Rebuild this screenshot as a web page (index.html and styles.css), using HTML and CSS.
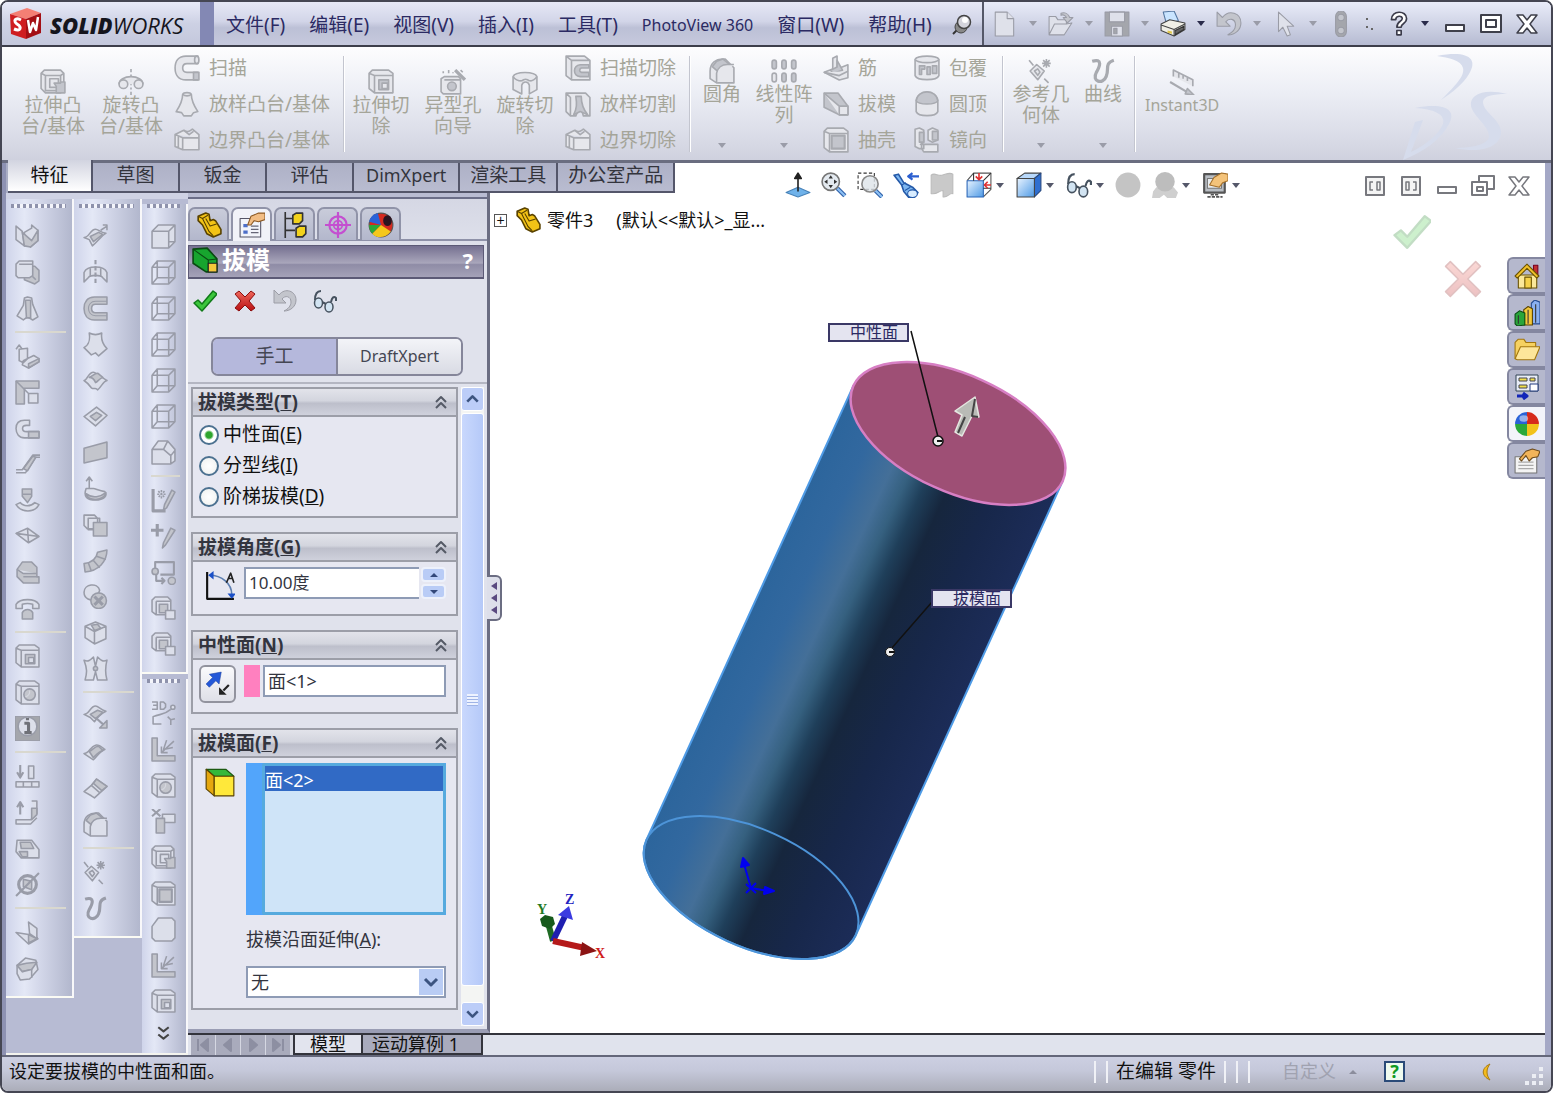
FILE: index.html
```html
<!DOCTYPE html>
<html lang="zh-CN">
<head>
    <meta charset="UTF-8">
    <meta name="viewport" content="width=device-width, initial-scale=1.0">
    <title>SolidWorks - 零件3</title>
    <link rel="stylesheet" href="styles.css">
</head>
<body>

<!-- icon set, 24x24 -->
<svg class="sprite" aria-hidden="true">
    <defs>
        <linearGradient id="blueface" x1="0" y1="0" x2="1" y2="1"><stop offset="0" stop-color="#e8f3ff"/><stop offset="1" stop-color="#4f9be6"/></linearGradient>
        <linearGradient id="redface" x1="0" y1="0" x2="0" y2="1"><stop offset="0" stop-color="#f0685c"/><stop offset="1" stop-color="#b80f12"/></linearGradient>
        <linearGradient id="body" gradientUnits="userSpaceOnUse" x1="-115" y1="0" x2="115" y2="0">
            <stop offset="0" stop-color="#2c659c"/><stop offset=".16" stop-color="#32689f"/><stop offset=".3" stop-color="#446f98"/>
            <stop offset=".38" stop-color="#35607f"/><stop offset=".46" stop-color="#1f3f5a"/><stop offset=".56" stop-color="#16263d"/><stop offset=".75" stop-color="#17274a"/><stop offset="1" stop-color="#1c2c58"/>
        </linearGradient>
    </defs>

    <!-- ribbon -->
    <symbol id="boss" viewBox="0 0 24 24"><path d="M1 4l3-3h15l3 3v15l-3 3H5l-4-4zM5 6h14v14H5zM1 4l4 2M19 6l3-2M9 9h8v8H9z"/><path class="d" d="M13 13h6v-1h4v10h-8v-6z"/></symbol>
    <symbol id="revolve" viewBox="0 0 24 24"><path d="M12 0v3M12 5v14M12 21v3" stroke-dasharray="4 2"/><path d="M1 14c0-4 5-7 11-7s11 3 11 7"/><circle cx="5" cy="14" r="4"/><circle cx="19" cy="14" r="4"/></symbol>
    <symbol id="sweep" viewBox="0 0 24 24"><path d="M22 1H11C4 1 1 6 1 12s3 11 10 11h11v-7H12c-3 0-4-2-4-4s1-4 4-4h10z"/><ellipse cx="21" cy="4.500" rx="2" ry="3.500"/><path class="d" d="M18 16h5v7h-5z"/></symbol>
    <symbol id="loft" viewBox="0 0 24 24"><path d="M8 3c1-2 7-2 8 0 0 6 2 10 6 16l-4 1-2 3H9l-2-3-5-1C6 13 8 9 8 3z"/><path d="M8 3c2 2 6 2 8 0"/></symbol>
    <symbol id="bound" viewBox="0 0 24 24"><path d="M1 7l8-4c4 3 6 0 8-1l6 5v14H8l-7-3zM1 7l7 3h15M8 10v11M9 3l5 4 4-3M4 9v10"/></symbol>
    <symbol id="cut" viewBox="0 0 24 24"><path d="M1 4l3-3h15l4 3v18H6l-5-4zM6 6h17M6 6v16M1 4l5 2"/><path class="d" d="M10 10h9v9h-9z"/><path d="M13 13h5v5h-5z"/></symbol>
    <symbol id="hole" viewBox="0 0 24 24"><path d="M1 9l3-2h13l2 2v14H3l-2-2zM4 10h15"/><circle class="d" cx="11" cy="16" r="4"/><path d="M14 1l9 9" stroke-width="3"/><path d="M3 2v2M8 1v3M12 3v1M19 1l2 2"/></symbol>
    <symbol id="revcut" viewBox="0 0 24 24"><path d="M1 7c2-5 20-5 22 0v12l-7 4v-8c-1-4-6-4-7 0v8l-8-4z"/><path d="M1 7c2 3 6 4 8 4M23 7c-2 3-5 4-7 4M9 11c2-2 5-2 7 0"/></symbol>
    <symbol id="sweepcut" viewBox="0 0 24 24"><path d="M1 1h17l5 4v18H6l-5-4zM6 5h17M6 5v18M1 1l5 4"/><path class="d" d="M22 9h-8c-7 1-7 10 0 11h8v-4h-7c-2-1-2-3 0-4h7z"/></symbol>
    <symbol id="loftcut" viewBox="0 0 24 24"><path d="M1 2h18l4 4v17h-6l-3-10-4 10H5l-4-4zM1 2l4 4v17"/><path class="d" d="M10 5h5c0 7 2 12 6 17l-7-3-6 3c3-6 3-10 2-17z"/></symbol>
    <symbol id="fillet" viewBox="0 0 24 24"><path d="M1 12C1 4 7 1 12 1h3l8 8v14H7l-6-4z"/><path class="d" d="M3 8l4-5 6-2 6 5c-5 0-8 4-9 8z"/><path d="M7 23V14c1-5 5-8 10-8h6"/></symbol>
    <symbol id="pattern" viewBox="0 0 24 24"><g class="d"><rect x="1" y="2" width="4" height="8" rx="2"/><rect x="10" y="2" width="4" height="8" rx="2"/><rect x="19" y="2" width="4" height="8" rx="2"/><rect x="10" y="14" width="4" height="8" rx="2"/><rect x="19" y="14" width="4" height="8" rx="2"/></g><rect x="1" y="14" width="4" height="8" rx="2"/></symbol>
    <symbol id="rib" viewBox="0 0 24 24"><path d="M9 3l4-2v12l10-4v12l-8 2-14-7 8-3z"/><path class="d" d="M13 5l5 9-9 3-2-3 6-3z"/><path d="M1 16l14 3 8-4"/></symbol>
    <symbol id="draft" viewBox="0 0 24 24"><path class="d" d="M1 2h13l9 12v8h-8L1 15z"/><path d="M1 2l14 12v8M15 14h8v8h-8z"/></symbol>
    <symbol id="shell" viewBox="0 0 24 24"><path d="M1 4l3-3h15l4 3v19H6l-5-4zM6 6h17M6 6v17M1 4l5 2"/><path class="d" d="M8 8h12v12H8z" stroke-width="2"/></symbol>
    <symbol id="wrap" viewBox="0 0 24 24"><path d="M1 4c2-4 20-4 22 0v15c-2 5-20 5-22 0z"/><path d="M1 4c2 4 20 4 22 0"/><path class="d" d="M5 10h5v3H7v5h-2zM12 11h3v7h-3zM17 10h4v7h-4z"/></symbol>
    <symbol id="dome" viewBox="0 0 24 24"><path d="M2 10C3-2 21-2 22 10v9c-2 5-18 5-20 0z"/><path class="d" d="M2 9C3-2 21-2 22 9c-2 4-18 4-20 0z"/></symbol>
    <symbol id="mirror" viewBox="0 0 24 24"><path d="M1 2l4-1 4 2v11l-3 2h3v4H5l-4-2zM13 3l4-2 5 2v9l-5 2-4-2zM7 16h15v7H9l-2-3z"/><path class="d" d="M5 5h4v9H5zM17 4h5v8h-5z"/></symbol>
    <symbol id="refgeo" viewBox="0 0 24 24"><path d="M2 12l6-6 7 6-6 8zM6 12l3-2 2 3-2 3zM1 2l4 5M15 19l4 4M17 1v8M13 5h8M14 2l6 6M20 2l-6 6"/></symbol>
    <symbol id="curve" viewBox="0 0 24 24"><path d="M2 3c10-3 7 5 4 10-5 9 6 12 9 4 3-7-2-12 7-15" fill="none" stroke-width="3"/></symbol>
    <symbol id="instant" viewBox="0 0 24 24"><path d="M4 7V1l18 9v6M9 4v4M13 6v3M17 8v3"/><path d="M1 12l17 10" stroke-width="2"/><path class="d" d="M15 23l2-5 6 6z"/></symbol>

    <!-- docked toolbars -->
    <symbol id="sheets" viewBox="0 0 24 24"><path d="M1 2l6 5 2 14-8-6zM9 8l7-4v-3l6 5v10l-7 6-6-8z"/><path class="d" d="M7 8l9 8 6-10v10l-7 6-6-1z"/></symbol>
    <symbol id="copies" viewBox="0 0 24 24"><path class="d" d="M9 6h10l4 4v10l-4 3-10-4z"/><path d="M1 4l3-3h13v14l-3 2H3l-2-2zM4 4h13M20 19l-3-3"/></symbol>
    <symbol id="cone" viewBox="0 0 24 24"><path d="M9 2l3-1 4 1 1 6 5 12-5 3-5-3-4 3-6-4 6-10z"/><path class="d" d="M10 4h5v17h-4z"/></symbol>
    <symbol id="bend" viewBox="0 0 24 24"><path d="M4 5l8-1v10l-4 4-4-2zM8 16l10-5 5 3v3l-10 6-6-3zM1 5l3-4 3 4"/><path class="d" d="M13 19l10-5v3l-10 6z"/></symbol>
    <symbol id="corner" viewBox="0 0 24 24"><path class="d" d="M1 1h22v7H9v15H1z"/><path d="M1 1l12 12M13 13h9v9h-9z"/></symbol>
    <symbol id="hook" viewBox="0 0 24 24"><path d="M14 4H9C4 4 1 7 1 12s3 9 8 9h14v-6H11c-5 0-5-6 0-6h3z"/><path class="d" d="M13 15h10v6H13z"/></symbol>
    <symbol id="hookwide" viewBox="0 0 24 24"><path class="d" d="M23 1H11C4 1 1 6 1 12s3 11 10 11h12v-7H12c-5 0-5-8 0-8h11z"/><path d="M23 5H12c-9 0-9 14 0 14h11" fill="none" stroke-width="1"/></symbol>
    <symbol id="jog" viewBox="0 0 24 24"><path d="M1 20h9L20 5h4M1 17h6L17 3h7" fill="none"/><path class="d" d="M8 16l9-12 3 1-8 13z"/></symbol>
    <symbol id="form" viewBox="0 0 24 24"><path class="d" d="M7 1h9v7l-4 6-5-6z"/><path d="M7 6h9M1 16l4-2c3 4 10 4 14 0l4 2c-4 8-17 8-22 0z"/></symbol>
    <symbol id="cross" viewBox="0 0 24 24"><path d="M1 9l11-5 11 8-10 6zM12 4l1 14M1 9l22 3"/></symbol>
    <symbol id="block" viewBox="0 0 24 24"><path class="d" d="M2 9l5-7h9l5 5v9h2v6H8l-6-6z"/><path d="M2 9l6 4h13M8 16h15"/></symbol>
    <symbol id="phone" viewBox="0 0 24 24"><path d="M1 8c4-6 18-6 22 0v4h-6V8c-3-1-7-1-10 0v4H1z"/><path class="d" d="M7 16c2-4 8-4 10 0v6H7z"/></symbol>
    <symbol id="simplehole" viewBox="0 0 24 24"><path d="M1 4l3-3h15l4 3v19H6l-5-4zM6 6h17M6 6v17M1 4l5 2"/><circle class="d" cx="14" cy="14" r="5.500"/><path class="w" d="M10 16a5 5 0 004-6"/></symbol>
    <symbol id="info" viewBox="0 0 24 24"><path class="k" d="M0 0h24v24H0z"/><circle cx="12" cy="10" r="9"/><path d="M9 7h4v9M9 16h7M12 2v2" fill="none" stroke="#6f7178" stroke-width="3"/></symbol>
    <symbol id="unfold" viewBox="0 0 24 24"><path d="M5 1v10M2 8l3 5 3-5" stroke-width="2"/><path d="M13 2h5v12h-5zM1 17h22v5H1zM8 17v5M16 17v5"/></symbol>
    <symbol id="fold" viewBox="0 0 24 24"><path d="M5 14V4M2 7l3-5 3 5" stroke-width="2"/><path d="M16 1h5v12l-6 6H1v4h14l6-6"/><path class="d" d="M16 8h5v6l-5 5z"/></symbol>
    <symbol id="flat" viewBox="0 0 24 24"><path d="M2 4h14l7 9v8H6l-5-6z"/><path class="d" d="M5 6h10l3 6H6zM4 15h8v5H7z"/></symbol>
    <symbol id="nobend" viewBox="0 0 24 24"><circle cx="12" cy="12" r="8.500" stroke-width="3"/><path class="d" d="M8 7l8 2v8l-8-3z"/><path d="M1 23L23 1" stroke-width="2"/></symbol>
    <symbol id="rip" viewBox="0 0 24 24"><path d="M13 2l8 6v10l-7-5zM1 12l12 2 9 4-9 5z"/><path class="d" d="M13 14l8 4-8 4z"/></symbol>
    <symbol id="welded" viewBox="0 0 24 24"><path d="M2 9l8-7 10 2 2 9-8 9-9 1-3-6z"/><path class="d" d="M2 9l9-2 10-1-5 7-9 2z"/><path d="M7 15l9-2v8"/></symbol>

    <symbol id="surf" viewBox="0 0 24 24"><path d="M1 13C6 13 7 6 12 5c3-1 5 1 9 4-4 1-7 6-11 10z"/><path class="d" d="M6 11c4-2 5-5 9-5l4 4c-4 1-7 5-9 7z"/></symbol>
    <symbol id="surfx" viewBox="0 0 24 24"><path d="M1 12c3 0 4-8 9-8 3 0 2 3 5 2 2 3 5 4 8 6-4 1-5 6-9 9-2-3-3 0-6-2-2-3-4-5-7-7z"/><path class="d" d="M6 9c3 0 5 2 6 5 2-1 4-4 7-5l-5-4c-3 0-5 3-8 4z"/></symbol>
    <symbol id="surfarrow" viewBox="0 0 24 24"><path d="M1 13C6 13 7 5 12 5c3 0 4 3 10 4-4 2-8 8-13 12l-3-6zM17 6l6-4M19 1h4v5"/><path class="d" d="M7 12l8-4 4 2-9 7z"/></symbol>
    <symbol id="surfext" viewBox="0 0 24 24"><path d="M1 10c5 0 6-8 11-8 3 0 4 3 10 5-4 2-7 4-11 10l-4-4z"/><path class="d" d="M7 10l7-4 5 2-7 6z"/><path d="M13 14l8 7" stroke-width="2"/><path class="d" d="M23 16v7h-7z"/></symbol>
    <symbol id="surfrev" viewBox="0 0 24 24"><path d="M1 21V12c3-7 19-7 22 0v9l-4-4c-2-3-12-3-14 0z"/><path d="M12 0v24" stroke-dasharray="4 2" stroke-width="2"/><path d="M7 8v8M17 8v8"/></symbol>
    <symbol id="surfloft" viewBox="0 0 24 24"><path d="M6 1c4 2 8 2 12 0-1 7 1 11 5 15l-8 7-3-3-4 2-7-7C6 12 7 8 6 1z"/></symbol>
    <symbol id="surffill" viewBox="0 0 24 24"><path d="M1 12l12-9 10 8-11 10z"/><path class="d" d="M7 12l6-4 5 3-6 5z"/></symbol>
    <symbol id="knit" viewBox="0 0 24 24"><path d="M1 15l7-6 5-6 10 7-12 11-3-2z"/><path class="d" d="M10 7l3-4 10 7-5 4z"/><path d="M8 9l8 7"/></symbol>
    <symbol id="planar" viewBox="0 0 24 24"><path class="d" d="M1 8l22-6v15L1 22z"/></symbol>
    <symbol id="radiate" viewBox="0 0 24 24"><path d="M6 12V1M3 5l3-4 3 4M3 12h7c2 0 5 2 11 3 3 4-1 8-9 8S0 20 3 12z"/><path class="d" d="M3 17c6 5 14 3 19-1-1 8-18 9-19 1z"/></symbol>
    <symbol id="offset" viewBox="0 0 24 24"><path d="M1 3h10l3 3v10H4l-3-3zM5 6h11v11H5z"/><path class="d" d="M10 10h13v13H10z"/></symbol>
    <symbol id="ruled" viewBox="0 0 24 24"><path class="d" d="M14 4l9-2c0 11-8 20-21 21l-1-8C9 14 13 10 14 4z"/><path d="M13 8l9 3M10 12l6 7M5 14l3 8"/></symbol>
    <symbol id="delface" viewBox="0 0 24 24"><path d="M1 8c0-8 13-10 15-2l-3 8c-6 3-12 0-12-6z"/><circle class="d" cx="15" cy="16" r="7.500"/><path d="M11 12l8 8M19 12l-8 8" stroke-width="3"/></symbol>
    <symbol id="cubeiso" viewBox="0 0 24 24"><path d="M2 6l10-4 10 4v12l-11 5-9-6zM2 6l9 5 11-5M11 11v12"/><path class="d" d="M8 5l6-1 3 4-6 2z"/></symbol>
    <symbol id="trim" viewBox="0 0 24 24"><path d="M1 4c4 2 6 0 9-3l2 9 2-9c3 3 5 5 9 3-2 8-2 12 0 19H14l-2-8-2 8H2C4 16 4 12 1 4z"/><circle class="d" cx="12" cy="12" r="2"/></symbol>
    <symbol id="wire" viewBox="0 0 24 24"><path d="M1 7h16v16H1zM6 1h17v16H6zM1 7l5-6M17 7l6-6M17 23l6-6M1 23l5-6" fill="none"/></symbol>
    <symbol id="solid" viewBox="0 0 24 24"><path d="M1 7h16v16H1zM1 7l6-6h16v16l-6 6M17 7l6-6M17 17h6"/></symbol>
    <symbol id="chamf" viewBox="0 0 24 24"><path d="M1 9l6-8h9l7 8v11l-4 3H1zM1 9h11l7 6v8M12 9l4-8M19 15l4-5"/></symbol>
    <symbol id="sketch" viewBox="0 0 24 24"><path d="M2 1v21h12" fill="none" stroke-width="3"/><path d="M10 2v9M6 6h9M7 3l6 6M13 3L7 9" stroke-dasharray="2 1"/><path class="d" d="M20 2l3 2-8 15-3 2 1-5z"/></symbol>
    <symbol id="sketchadd" viewBox="0 0 24 24"><path d="M6 0v12M0 6h12" stroke-width="3"/><path class="d" d="M19 4l4 2-9 14-3 3 1-5z"/></symbol>
    <symbol id="convert" viewBox="0 0 24 24"><path d="M4 8V2h18v12H9" fill="none" stroke-width="2"/><circle class="d" cx="4" cy="11" r="3"/><circle class="d" cx="20" cy="20" r="3.500"/><path d="M5 14v6h8M10 17l3 3-3 3" fill="none" stroke-width="2"/></symbol>
    <symbol id="nest" viewBox="0 0 24 24"><path d="M1 4l3-3h12l3 3v14H5l-4-3zM5 5h14M5 5v13"/><path class="d" d="M8 8h8v8H8z"/><path d="M14 14h9v8h-9z"/></symbol>
    <symbol id="threed" viewBox="0 0 24 24"><path d="M1 1h5v7H1M2 4h4M9 1h3l2 2v3l-2 2H9z" fill="none"/><circle cx="21" cy="6" r="2"/><path d="M10 22H2v-7c7-3 10-1 17-7M16 15l3 3 4-1M19 18v5" fill="none"/></symbol>
    <symbol id="lshape" viewBox="0 0 24 24"><path class="d" d="M1 1h5v17h17v5H1z"/><path d="M22 4L10 15M10 9v6h6M15 3l-3 9 9-2" fill="none"/></symbol>
    <symbol id="delbody" viewBox="0 0 24 24"><path d="M1 0l8 7M9 0L1 7" stroke-width="2"/><path d="M11 5h12v8H11z"/><path class="d" d="M5 9h8v14H5z"/></symbol>
    <symbol id="plate" viewBox="0 0 24 24"><path d="M1 9l6-8h13l3 3v16l-3 3H4l-3-3z"/></symbol>
    <symbol id="more" viewBox="0 0 24 24"><path d="M7 5l5 4 5-4M7 12l5 4 5-4" fill="none" stroke="#444" stroke-width="2"/></symbol>

    <!-- quick access -->
    <symbol id="new" viewBox="0 0 24 24"><path d="M3 1h11l6 6v16H3z"/><path d="M14 1v6h6"/></symbol>
    <symbol id="open" viewBox="0 0 24 24"><path d="M1 5h6l2 3h8v4l5-1-7 11H1zM1 22l5-10h12"/><path class="d" d="M12 2c4-1 7 1 8 4h3l-5 5-4-5h3c-1-2-3-3-5-2z"/></symbol>
    <symbol id="save" viewBox="0 0 24 24"><path class="k" d="M1 1h22v22H1z"/><path d="M5 1h14v9H5zM7 14h10v9H7z"/><path class="k" d="M9 16h3v5H9z"/></symbol>
    <symbol id="print" viewBox="0 0 24 24"><path fill="#c9e4ff" stroke="#5577a0" d="M3 1l10-1 4 9-11 3z"/><path fill="#f0efe6" stroke="#444" d="M1 12l8-4 14 3v6l-10 6L1 18z"/><path fill="none" stroke="#444" d="M1 13l12 4 10-5M13 17v6"/><path fill="#e2c84a" stroke="none" d="M7 18l4 1v2l-4-1z"/><path fill="#666" stroke="#333" d="M14 18l8-4v3l-8 5z"/></symbol>
    <symbol id="undo" viewBox="0 0 24 24"><path class="d" d="M1 1v13h12l-4-4c3-4 9-3 9 3 0 4-3 7-7 9 7 0 12-5 12-11C23 2 12-2 6 6z"/></symbol>
    <symbol id="pointer" viewBox="0 0 24 24"><path d="M6 1v18l4-4 4 8 3-1-3-8h6z"/></symbol>
    <symbol id="traffic" viewBox="0 0 24 24"><rect class="k" x="7" y="0" width="10" height="24" rx="5"/><circle class="d" cx="12" cy="6" r="3"/><circle class="d" cx="12" cy="18" r="3"/></symbol>
    <symbol id="help" viewBox="0 0 24 24"><path d="M5 8C5-1 19-1 19 7c0 5-5 4-5 8h-4c0-6 5-5 5-8 0-3-6-3-6 1zM10 18h4v4h-4z" fill="#fff" stroke="#3b3b4a" stroke-width="1.500"/></symbol>
    <symbol id="min" viewBox="0 0 24 24"><path d="M3 13h18v6H3z" fill="#fff" stroke-width="2"/></symbol>
    <symbol id="max" viewBox="0 0 24 24"><path d="M2 3h20v17H2zM7 8h10v7H7z" fill="#fff" stroke-width="2"/></symbol>
    <symbol id="close" viewBox="0 0 24 24"><path d="M2 3h6l4 5 4-5h6l-7 9 7 9h-6l-4-5-4 5H2l7-9z" fill="#fff" stroke-width="1.500"/></symbol>
    <symbol id="restore" viewBox="0 0 24 24"><path d="M8 2h15v13H8z" fill="#fff" stroke-width="2"/><path d="M1 8h15v13H1zM6 13h6v4H6z" fill="#fff" stroke-width="2"/></symbol>
    <symbol id="paneleft" viewBox="0 0 24 24"><path d="M3 3h18v18H3z" fill="#f4f4f4" stroke-width="2"/><path d="M10 8H7v8h3M14 8h3v8h-3z" fill="none" stroke-width="1.500"/></symbol>
    <symbol id="paneright" viewBox="0 0 24 24"><path d="M3 3h18v18H3z" fill="#f4f4f4" stroke-width="2"/><path d="M14 8h3v8h-3M7 8h3v8H7z" fill="none" stroke-width="1.500"/></symbol>
    <symbol id="pin" viewBox="0 0 24 24"><path d="M3 21l6-6" stroke="#333" stroke-width="2"/><circle cx="11" cy="14" r="6" fill="#888" stroke="#444"/><circle cx="14" cy="9" r="6.500" fill="#d4d4dc" stroke="#444" stroke-width="1.500"/><circle cx="15" cy="7" r="3" fill="#fff" stroke="none"/></symbol>

    <!-- heads-up view -->
    <symbol id="normal" viewBox="0 0 24 24"><path d="M1 19l11-5 11 5-11 4z" fill="#6fb2ea" stroke="#4782b8"/><path d="M12 18V3M9 6l3-5 3 5z" fill="#222" stroke="#222" stroke-width="1.500"/></symbol>
    <symbol id="zoomfit" viewBox="0 0 24 24"><path d="M15 15l7 7" stroke="#2d5fa8" stroke-width="4"/><path d="M15 15l7 7" stroke="#8cc0f4" stroke-width="2"/><circle cx="9" cy="9" r="8" fill="#e4eaf0" stroke="#777" stroke-width="1.500"/><path d="M9 3l2 3H7zM9 15l2-3H7zM3 9l3-2v4zM15 9l-3-2v4z" fill="#333" stroke="none"/></symbol>
    <symbol id="zoomarea" viewBox="0 0 24 24"><path d="M1 1h15v15H1z" fill="none" stroke="#333" stroke-dasharray="3 2"/><path d="M17 17l6 6" stroke="#2d5fa8" stroke-width="4"/><path d="M17 17l6 6" stroke="#8cc0f4" stroke-width="2"/><circle cx="12" cy="11" r="7.500" fill="#dde3e9" fill-opacity=".8" stroke="#888" stroke-width="1.500"/></symbol>
    <symbol id="prev" viewBox="0 0 24 24"><path d="M1 3l4-1 5 8 8 4 5 5-3 4-5 1-5-6-2-6z" fill="#7db6f0" stroke="#2459a8" stroke-width="1.500"/><ellipse cx="18" cy="20" rx="4.500" ry="3.500" fill="#d8ecff" stroke="#2459a8"/><path d="M8 12l4-2M11 17l5-3" stroke="#2459a8"/><path d="M24 4h-9M18 1l-4 3 4 3" fill="none" stroke="#2b5fd0" stroke-width="2"/></symbol>
    <symbol id="section" viewBox="0 0 24 24"><path d="M2 3c3-3 6 1 10 0s7-3 10-1v18c-3-1-5 4-9 3v-6c-4 0-5 4-11 3z" fill="#c9c9c9" stroke="#bbb"/></symbol>
    <symbol id="orient" viewBox="0 0 24 24"><path d="M1 8l6-7h16v15l-7 7" fill="#fff" stroke="#555"/><path d="M1 8h15v15H1z" fill="url(#blueface)" stroke="#2b66b8"/><path d="M16 8l7-7M7 1v7M16 15h7" fill="none" stroke="#333"/><path d="M12 1v6M9 4l3 3 3-3M23 12h-6M20 9l-3 3 3 3" fill="none" stroke="#e03030" stroke-width="1.500"/></symbol>
    <symbol id="display" viewBox="0 0 24 24"><path d="M1 6l7-5h15l-6 5z" fill="#b8d8fa" stroke="#444"/><path d="M17 6l6-5v16l-6 6z" fill="#2f6fd0" stroke="#2a4a80"/><path d="M1 6h16v17H1z" fill="url(#blueface)" stroke="#444"/></symbol>
    <symbol id="glasses" viewBox="0 0 24 24"><path d="M2 11C2 5 4 2 8 2M18 13c1-5 3-6 5-4v3M9 13l4 2" fill="none" stroke="#46525f" stroke-width="2"/><ellipse cx="5.500" cy="14" rx="4" ry="5" fill="#d2e4f2" stroke="#46525f" stroke-width="1.500"/><ellipse cx="16" cy="18" rx="4" ry="5" fill="#d2e4f2" stroke="#46525f" stroke-width="1.500"/></symbol>
    <symbol id="scene" viewBox="0 0 24 24"><circle cx="12" cy="12" r="11.500" fill="#c4c4c4" stroke="none"/></symbol>
    <symbol id="appear" viewBox="0 0 24 24"><path d="M4 14h16l4 5-2 5h-8l-3-3-4 3H0l1-6z" fill="#cfcfcf" stroke="none"/><circle cx="12" cy="9" r="9" fill="#bdbdbd" stroke="none"/></symbol>
    <symbol id="viewset" viewBox="0 0 24 24"><path d="M2 2h19v17H2z" fill="#b9bec4" stroke="#555" stroke-width="2"/><path d="M5 6h13v9H5z" fill="#e9edf0" stroke="#777"/><path d="M7 12l4-7 7-4 6 1v6l-5 2-3 4z" fill="#f4c37a" stroke="#a5702a"/><path d="M8 21h8M5 23h14" stroke="#555" stroke-width="1.500" stroke-dasharray="3 1"/></symbol>

    <!-- panel -->
    <symbol id="part" viewBox="0 0 24 24"><path d="M2 4l7-3 3 1 1 6 3-1 2 1 5 8v4l-7 3-6-3-4-8-4-4z" fill="#f3c316" stroke="#5a4300" stroke-width="1.500"/><path d="M2 4l4 2 6 12 4 4M9 6l4 7 6-2M6 6l5-3" fill="none" stroke="#5a4300"/></symbol>
    <symbol id="propman" viewBox="0 0 24 24"><path d="M1 6h19v17H1z" fill="#f2f4fa" stroke="#556"/><path d="M4 11h4v3H4zM4 17h4v3H4z" fill="#4d6fc8" stroke="none"/><path d="M11 13h7M11 16h7M11 19h7" stroke="#667"/><path d="M8 12l3-8 7-3h6v6l-6 2-4-1-3 4z" fill="#f2bd84" stroke="#8d5a24"/></symbol>
    <symbol id="config" viewBox="0 0 24 24"><path d="M3 0v24M3 6h7M3 17h9" fill="none" stroke="#333" stroke-width="1.500"/><path d="M10 3l3-2h6v7l-3 3h-6zM13 15l3-2h6v7l-3 3h-6z" fill="#f2d21c" stroke="#333" stroke-width="1.500"/></symbol>
    <symbol id="dimx" viewBox="0 0 24 24"><circle cx="12" cy="12" r="8" fill="none" stroke="#c44fd0" stroke-width="2"/><circle cx="12" cy="12" r="4" fill="none" stroke="#c44fd0" stroke-width="1.500"/><path d="M12 0v24M0 12h24" stroke="#c44fd0" stroke-width="2"/></symbol>
    <symbol id="ball" viewBox="0 0 24 24"><path d="M12 12V1A11 11 0 0123 12z" fill="#d62a1c" stroke="none"/><path d="M12 12h11a11 11 0 01-11 11z" fill="#f2c21a" stroke="none"/><path d="M12 12v11A11 11 0 011 12z" fill="#2ba83a" stroke="none"/><path d="M12 12H1A11 11 0 0112 1z" fill="#2a62d8" stroke="none"/><ellipse cx="9" cy="7" rx="4" ry="3" fill="#fff" fill-opacity=".5" stroke="none"/></symbol>
    <symbol id="ballred" viewBox="0 0 24 24"><circle cx="12" cy="12" r="11" fill="#d42a20" stroke="#555"/><path d="M12 12L1 9a11 11 0 018-8z" fill="#2a62d8" stroke="none"/><path d="M12 12H1a11 11 0 003 8z" fill="#2ba83a" stroke="none"/><path d="M4 20c3 4 12 5 17-2l-9-6z" fill="#f4c81c" stroke="none"/><ellipse cx="18" cy="8" rx="4" ry="5" fill="#2a1420" stroke="none"/></symbol>
    <symbol id="draftc" viewBox="0 0 24 24"><path d="M1 2l13-1 9 10v12H13L1 15z" fill="#17a52e" stroke="#0a4a12" stroke-width="1.500"/><path d="M1 2l14 10 8-1M15 12v11" fill="none" stroke="#0a4a12"/><path d="M15 15h8v8h-8z" fill="#f5c93a" stroke="#222"/></symbol>
    <symbol id="ok" viewBox="0 0 24 24"><path d="M1 14l4-3 4 4L20 2l4 3L9 22z" fill="#3cc63c" stroke="#0f7a18" stroke-width="1.500"/></symbol>
    <symbol id="cancel" viewBox="0 0 24 24"><path d="M2 5l4-3 6 6 6-6 4 3-6 7 6 7-4 3-6-6-6 6-4-3 6-7z" fill="url(#redface)" stroke="#8c0d0d"/></symbol>
    <symbol id="cross2" viewBox="0 0 24 24"><path d="M1 4l3-3 8 8 8-8 3 3-8 8 8 8-3 3-8-8-8 8-3-3 8-8z" fill="url(#redface)" stroke="#8c0d0d"/></symbol>
    <symbol id="angle" viewBox="0 0 28 28"><path d="M2 1v25h25" fill="none" stroke="#111" stroke-width="2"/><path d="M4 4c12 0 21 8 21 18" fill="none" stroke="#5d7eb0" stroke-width="1.500"/><path d="M3 4l5-4v8zM25 26l-4-5h8z" fill="#1b50c8" stroke="none"/><path d="M20 11l4-9 3 9M22 7h4" fill="none" stroke="#222" stroke-width="1.500"/></symbol>
    <symbol id="flip" viewBox="0 0 24 24"><path d="M1 12l6-6-3-3 11-2-2 11-3-3-6 6z" fill="#2458d8" stroke="#1a3fa0" stroke-width=".5"/><path d="M22 13l-5 5" stroke="#222" stroke-width="2"/><path d="M13 15v7h7z" fill="#222" stroke="none"/></symbol>
    <symbol id="yellowcube" viewBox="0 0 26 26"><path d="M1 2h17l7 6H8z" fill="#35b83a" stroke="#1c5a12"/><path d="M1 2l7 6v17l-7-6z" fill="#e5a70e" stroke="#5a4300"/><path d="M8 8h17v17H8z" fill="#ffe83a" stroke="#5a4300"/></symbol>
    <symbol id="collapse" viewBox="0 0 14 16"><path d="M2 8l5-5 5 5M2 14l5-5 5 5" fill="none" stroke="#555a66" stroke-width="2"/></symbol>

    <!-- task pane -->
    <symbol id="home" viewBox="0 0 24 24"><path d="M18 2h4v9h-4z" fill="#c03030" stroke="#702"/><path d="M4 11h17v12H4z" fill="#fbe89a" stroke="#6a5200"/><path d="M1 12L12 1l11 11-2 2-9-9-9 9z" fill="#f2c12a" stroke="#6a5200"/><path d="M10 13h6v10h-6z" fill="#f6d24a" stroke="#6a5200"/></symbol>
    <symbol id="library" viewBox="0 0 24 24"><path d="M16 3l3-3 5 2v20h-8z" fill="#8ab0f0" stroke="#234a90"/><path d="M9 9l4-3 4 2v15H9z" fill="#f4c83a" stroke="#5a4300"/><path d="M1 13l4-3 5 2v11l-7 1-2-2z" fill="#2aa53a" stroke="#0a4a12"/><path d="M4 14v8M13 9v13M20 4v17" stroke="#333"/></symbol>
    <symbol id="folder" viewBox="0 0 24 24"><path d="M1 20V5l3-3h5l2 3h9v5" fill="#f6d160" stroke="#a2760c"/><path d="M1 20L6 9h18l-5 12H3z" fill="#fde69a" stroke="#a2760c"/></symbol>
    <symbol id="palette" viewBox="0 0 24 26"><path d="M1 1h22v16H1z" fill="#e9edf6" stroke="#345"/><path d="M4 4h8v3H4zM15 4h5v3h-5zM4 11h8v3H4z" fill="#f2e04a" stroke="#445"/><path d="M15 10h8v7h-8z" fill="#fff" stroke="#223a80"/><path d="M2 22h9M8 19l4 3-4 3" fill="none" stroke="#1225b8" stroke-width="3"/></symbol>
    <symbol id="custom" viewBox="0 0 24 24"><path d="M1 8h20v15H1z" fill="#f4f4f4" stroke="#777"/><path d="M4 13h14M4 16h14M4 19h14" stroke="#aaa"/><path d="M5 10l6-7 6-2 7 2-2 5-5 1-3 3-3-5-4 5z" fill="#f2b45a" stroke="#6d4a1a"/></symbol>
</svg>

<div class="window">
    <header class="titlebar">
        <div class="brand">
            <svg class="cube" viewBox="0 0 34 34" aria-hidden="true">
                <path d="M1 7L18 1l14 5-15 6z" fill="#f47f74"/><path d="M1 7l16 5v20L2 27z" fill="#cf1d20"/><path d="M17 12l15-6v20l-15 6z" fill="#a30f14"/>
                <path d="M12 13c-6-3-8 1-4 4 5 3 4 8-3 5" fill="none" stroke="#fff" stroke-width="3"/><path d="M19 13l2 12 3-9 3 7 2-13" fill="none" stroke="#fff" stroke-width="2.500"/>
            </svg>
            <span class="name"><b>SOLID</b>WORKS</span>
        </div>
        <nav class="menu">
            <a href="#">文件(F)</a>
            <a href="#">编辑(E)</a>
            <a href="#">视图(V)</a>
            <a href="#">插入(I)</a>
            <a href="#">工具(T)</a>
            <a href="#" class="latin">PhotoView 360</a>
            <a href="#">窗口(W)</a>
            <a href="#">帮助(H)</a>
            <button class="pin" aria-label="固定"><svg><use href="#pin"/></svg></button>
        </nav>
        <div class="quick">
            <button aria-label="新建"><svg><use href="#new"/></svg></button><button class="drop" aria-label="新建选项"></button>
            <button aria-label="打开"><svg><use href="#open"/></svg></button><button class="drop" aria-label="打开选项"></button>
            <button aria-label="保存"><svg><use href="#save"/></svg></button><button class="drop" aria-label="保存选项"></button>
            <button aria-label="打印"><svg><use href="#print"/></svg></button><button class="drop on" aria-label="打印选项"></button>
            <button aria-label="撤销"><svg><use href="#undo"/></svg></button><button class="drop" aria-label="撤销选项"></button>
            <button aria-label="选择"><svg><use href="#pointer"/></svg></button><button class="drop" aria-label="选择选项"></button>
            <button aria-label="重建"><svg><use href="#traffic"/></svg></button>
            <span class="dots"></span>
            <button aria-label="帮助"><svg><use href="#help"/></svg></button><button class="drop on" aria-label="帮助选项"></button>
        </div>
        <div class="winbtns dark">
            <button aria-label="最小化"><svg><use href="#min"/></svg></button>
            <button aria-label="最大化"><svg><use href="#max"/></svg></button>
            <button aria-label="关闭"><svg><use href="#close"/></svg></button>
        </div>
    </header>

    <div class="ribbon">
        <button class="big"><svg><use href="#boss"/></svg>拉伸凸<br>台/基体</button>
        <button class="big"><svg><use href="#revolve"/></svg>旋转凸<br>台/基体</button>
        <div class="stack">
            <button><svg><use href="#sweep"/></svg>扫描</button>
            <button><svg><use href="#loft"/></svg>放样凸台/基体</button>
            <button><svg><use href="#bound"/></svg>边界凸台/基体</button>
        </div>
        <i class="rule"></i>
        <button class="big mid"><svg><use href="#cut"/></svg>拉伸切<br>除</button>
        <button class="big mid"><svg><use href="#hole"/></svg>异型孔<br>向导</button>
        <button class="big mid"><svg><use href="#revcut"/></svg>旋转切<br>除</button>
        <div class="stack">
            <button><svg><use href="#sweepcut"/></svg>扫描切除</button>
            <button><svg><use href="#loftcut"/></svg>放样切割</button>
            <button><svg><use href="#bound"/></svg>边界切除</button>
        </div>
        <i class="rule"></i>
        <button class="big menubtn"><svg><use href="#fillet"/></svg>圆角</button>
        <button class="big menubtn"><svg><use href="#pattern"/></svg>线性阵<br>列</button>
        <div class="stack">
            <button><svg><use href="#rib"/></svg>筋</button>
            <button><svg><use href="#draft"/></svg>拔模</button>
            <button><svg><use href="#shell"/></svg>抽壳</button>
        </div>
        <div class="stack">
            <button><svg><use href="#wrap"/></svg>包覆</button>
            <button><svg><use href="#dome"/></svg>圆顶</button>
            <button><svg><use href="#mirror"/></svg>镜向</button>
        </div>
        <i class="rule"></i>
        <button class="big menubtn"><svg><use href="#refgeo"/></svg>参考几<br>何体</button>
        <button class="big menubtn"><svg><use href="#curve"/></svg>曲线</button>
        <i class="rule"></i>
        <button class="big wide latin"><svg><use href="#instant"/></svg>Instant3D</button>
        <svg class="ds" viewBox="0 0 120 112" aria-hidden="true">
            <path d="M38 6c30-6 42 2 32 18-6 10-16 18-28 26 14-14 24-24 22-32-2-8-14-10-26-12z"/>
            <path d="M16 58c30-6 42 2 34 16-8 16-26 28-46 36l12-38 8-2-12 32c16-8 28-18 32-28 3-10-10-15-28-16z"/>
            <path d="M108 44c-22-6-38 0-36 12 2 10 18 20 18 30 0 8-16 12-34 12 28 6 46-2 46-16 0-12-18-20-18-30 0-6 10-8 24-8z"/>
        </svg>
    </div>

    <div class="workspace">
        <div class="tabrow">
            <nav class="tabs">
                <a href="#" class="active">特征</a>
                <a href="#">草图</a>
                <a href="#">钣金</a>
                <a href="#">评估</a>
                <a href="#" class="dim">DimXpert</a>
                <a href="#">渲染工具</a>
                <a href="#">办公室产品</a>
            </nav>
            <div class="headsup">
                <button aria-label="正视于"><svg><use href="#normal"/></svg></button>
                <button aria-label="整屏显示"><svg><use href="#zoomfit"/></svg></button>
                <button aria-label="局部放大"><svg><use href="#zoomarea"/></svg></button>
                <button aria-label="上一视图"><svg><use href="#prev"/></svg></button>
                <button aria-label="剖面视图"><svg><use href="#section"/></svg></button>
                <button class="has" aria-label="视图定向"><svg><use href="#orient"/></svg></button>
                <button class="has" aria-label="显示样式"><svg><use href="#display"/></svg></button>
                <button class="has" aria-label="隐藏显示"><svg><use href="#glasses"/></svg></button>
                <button aria-label="编辑外观"><svg><use href="#scene"/></svg></button>
                <button class="has" aria-label="应用布景"><svg><use href="#appear"/></svg></button>
                <button class="has" aria-label="视图设定"><svg><use href="#viewset"/></svg></button>
            </div>
            <div class="winbtns">
                <button aria-label="左窗格"><svg><use href="#paneleft"/></svg></button>
                <button aria-label="右窗格"><svg><use href="#paneright"/></svg></button>
                <button aria-label="最小化文档"><svg><use href="#min"/></svg></button>
                <button aria-label="还原文档"><svg><use href="#restore"/></svg></button>
                <button aria-label="关闭文档"><svg><use href="#close"/></svg></button>
            </div>
        </div>

        <div class="middle">
            <div class="docks">
                <div class="dock">
                    <i class="grip"></i>
                    <button aria-label="基体法兰"><svg><use href="#sheets"/></svg></button>
                    <button aria-label="转换钣金"><svg><use href="#copies"/></svg></button>
                    <button aria-label="放样折弯"><svg><use href="#cone"/></svg></button>
                    <hr>
                    <button aria-label="边线法兰"><svg><use href="#bend"/></svg></button>
                    <button aria-label="斜接法兰"><svg><use href="#corner"/></svg></button>
                    <button aria-label="褶边"><svg><use href="#hook"/></svg></button>
                    <button aria-label="转折"><svg><use href="#jog"/></svg></button>
                    <button aria-label="绘制折弯"><svg><use href="#form"/></svg></button>
                    <button aria-label="交叉折断"><svg><use href="#cross"/></svg></button>
                    <button aria-label="边角"><svg><use href="#block"/></svg></button>
                    <button aria-label="成形工具"><svg><use href="#phone"/></svg></button>
                    <hr>
                    <button aria-label="切除"><svg><use href="#cut"/></svg></button>
                    <button aria-label="简单直孔"><svg><use href="#simplehole"/></svg></button>
                    <button aria-label="通风口"><svg><use href="#info"/></svg></button>
                    <hr>
                    <button aria-label="展开"><svg><use href="#unfold"/></svg></button>
                    <button aria-label="折叠"><svg><use href="#fold"/></svg></button>
                    <button aria-label="展平"><svg><use href="#flat"/></svg></button>
                    <button aria-label="不折弯"><svg><use href="#nobend"/></svg></button>
                    <hr>
                    <button aria-label="切口"><svg><use href="#rip"/></svg></button>
                    <button aria-label="插入折弯"><svg><use href="#welded"/></svg></button>
                </div>
                <div class="dock">
                    <i class="grip"></i>
                    <button aria-label="拉伸曲面"><svg><use href="#surfarrow"/></svg></button>
                    <button aria-label="旋转曲面"><svg><use href="#surfrev"/></svg></button>
                    <button aria-label="扫描曲面"><svg><use href="#hookwide"/></svg></button>
                    <button aria-label="放样曲面"><svg><use href="#surfloft"/></svg></button>
                    <button aria-label="边界曲面"><svg><use href="#surfx"/></svg></button>
                    <button aria-label="填充曲面"><svg><use href="#surffill"/></svg></button>
                    <button aria-label="平面区域"><svg><use href="#planar"/></svg></button>
                    <button aria-label="延展曲面"><svg><use href="#radiate"/></svg></button>
                    <button aria-label="等距曲面"><svg><use href="#offset"/></svg></button>
                    <button aria-label="直纹曲面"><svg><use href="#ruled"/></svg></button>
                    <button aria-label="删除面"><svg><use href="#delface"/></svg></button>
                    <button aria-label="替换面"><svg><use href="#cubeiso"/></svg></button>
                    <button aria-label="中面"><svg><use href="#trim"/></svg></button>
                    <hr>
                    <button aria-label="延伸曲面"><svg><use href="#surfext"/></svg></button>
                    <button aria-label="剪裁曲面"><svg><use href="#surf"/></svg></button>
                    <button aria-label="缝合曲面"><svg><use href="#knit"/></svg></button>
                    <button aria-label="曲面圆角"><svg><use href="#fillet"/></svg></button>
                    <hr>
                    <button aria-label="参考几何体工具"><svg><use href="#refgeo"/></svg></button>
                    <button aria-label="曲线工具"><svg><use href="#curve"/></svg></button>
                </div>
                <div class="dockcol">
                    <div class="dock">
                        <i class="grip"></i>
                        <button aria-label="前视"><svg><use href="#solid"/></svg></button>
                        <button aria-label="后视"><svg><use href="#wire"/></svg></button>
                        <button aria-label="左视"><svg><use href="#wire"/></svg></button>
                        <button aria-label="右视"><svg><use href="#wire"/></svg></button>
                        <button aria-label="上视"><svg><use href="#wire"/></svg></button>
                        <button aria-label="下视"><svg><use href="#wire"/></svg></button>
                        <button aria-label="等轴测"><svg><use href="#chamf"/></svg></button>
                        <hr>
                        <button aria-label="草图绘制"><svg><use href="#sketch"/></svg></button>
                        <button aria-label="添加草图"><svg><use href="#sketchadd"/></svg></button>
                        <button aria-label="转换实体"><svg><use href="#convert"/></svg></button>
                        <button aria-label="分割"><svg><use href="#nest"/></svg></button>
                        <button aria-label="组合"><svg><use href="#nest"/></svg></button>
                    </div>
                    <div class="dock last">
                        <i class="grip"></i>
                        <button aria-label="3D草图"><svg><use href="#threed"/></svg></button>
                        <button aria-label="结构构件"><svg><use href="#lshape"/></svg></button>
                        <button aria-label="包覆工具"><svg><use href="#simplehole"/></svg></button>
                        <button aria-label="剪裁延伸"><svg><use href="#delbody"/></svg></button>
                        <button aria-label="拉伸"><svg><use href="#boss"/></svg></button>
                        <button aria-label="顶端盖"><svg><use href="#shell"/></svg></button>
                        <button aria-label="角撑板"><svg><use href="#plate"/></svg></button>
                        <button aria-label="圆角焊缝"><svg><use href="#lshape"/></svg></button>
                        <button aria-label="拉伸切除工具"><svg><use href="#cut"/></svg></button>
                        <button class="short" aria-label="更多"><svg><use href="#more"/></svg></button>
                    </div>
                </div>
            </div>

            <div class="main">
                <div class="split">
                    <aside class="panel">
                        <div class="ptabs">
                            <button aria-label="特征树"><svg><use href="#part"/></svg></button>
                            <button class="active" aria-label="属性"><svg><use href="#propman"/></svg></button>
                            <button aria-label="配置"><svg><use href="#config"/></svg></button>
                            <button aria-label="尺寸"><svg><use href="#dimx"/></svg></button>
                            <button aria-label="外观"><svg><use href="#ballred"/></svg></button>
                        </div>
                        <h1 class="ptitle"><svg><use href="#draftc"/></svg>拔模<button>?</button></h1>
                        <div class="actions">
                            <button aria-label="确定"><svg><use href="#ok"/></svg></button>
                            <button aria-label="取消"><svg><use href="#cancel"/></svg></button>
                            <button class="off" aria-label="撤销"><svg><use href="#undo"/></svg></button>
                            <button aria-label="细节预览"><svg><use href="#glasses"/></svg></button>
                        </div>
                        <div class="segment">
                            <button class="active">手工</button><button>DraftXpert</button>
                        </div>
                        <div class="scroller">
                            <form class="groups">
                                <section class="group">
                                    <h2><span>拔模类型(<u>T</u>)</span><svg><use href="#collapse"/></svg></h2>
                                    <div class="radios">
                                        <label><input type="radio" name="type" checked>中性面(<u>E</u>)</label>
                                        <label><input type="radio" name="type">分型线(<u>I</u>)</label>
                                        <label><input type="radio" name="type">阶梯拔模(<u>D</u>)</label>
                                    </div>
                                </section>
                                <section class="group">
                                    <h2><label for="angle-in">拔模角度(<u>G</u>)</label><svg><use href="#collapse"/></svg></h2>
                                    <div class="row">
                                        <svg class="lead"><use href="#angle"/></svg>
                                        <div class="spin">
                                            <input type="text" id="angle-in" value="10.00度">
                                            <span class="steps"><button type="button" class="up" aria-label="增加"></button><button type="button" class="down" aria-label="减少"></button></span>
                                        </div>
                                    </div>
                                </section>
                                <section class="group">
                                    <h2><label for="neutral">中性面(<u>N</u>)</label><svg><use href="#collapse"/></svg></h2>
                                    <div class="row">
                                        <button type="button" class="flip" aria-label="反向"><svg><use href="#flip"/></svg></button>
                                        <div class="pick"><i></i><input type="text" id="neutral" value="面&lt;1&gt;"></div>
                                    </div>
                                </section>
                                <section class="group">
                                    <h2><label for="faces">拔模面(<u>F</u>)</label><svg><use href="#collapse"/></svg></h2>
                                    <div class="row tall">
                                        <svg class="lead"><use href="#yellowcube"/></svg>
                                        <div class="faces">
                                            <select id="faces" size="6"><option selected>面&lt;2&gt;</option></select>
                                        </div>
                                        <label class="cap" for="along">拔模沿面延伸(<u>A</u>):</label>
                                        <div class="combo">
                                            <select id="along"><option>无</option></select>
                                            <svg viewBox="0 0 24 24"><path d="M6 9l6 6 6-6"/></svg>
                                        </div>
                                    </div>
                                </section>
                            </form>
                            <div class="scrollbar">
                                <button aria-label="向上"><svg viewBox="0 0 24 24"><path d="M6 15l6-6 6 6"/></svg></button>
                                <div class="thumb"><i></i></div>
                                <button aria-label="向下"><svg viewBox="0 0 24 24"><path d="M6 9l6 6 6-6"/></svg></button>
                            </div>
                        </div>
                        <button class="handle" aria-label="收起面板"><i></i><i></i><i></i></button>
                    </aside>

                    <div class="viewport">
                        <svg class="model" role="img" aria-label="零件模型">
                            <g transform="translate(-489 -193)">
                                <g transform="translate(957 433.5) rotate(24.500)">
                                    <path d="M-115 0V499A115 58.500 0 00115 499V0z" fill="url(#body)" stroke="#4f9be6" stroke-width="2"/>
                                    <ellipse cx="0" cy="499" rx="115" ry="58.500" fill="none" stroke="#4d94d8" stroke-width="2"/>
                                    <ellipse cx="0" cy="0" rx="115" ry="58.500" fill="#9e4f75" stroke="#d77fc4" stroke-width="2.500"/>
                                </g>
                                <path d="M910 331l27 106M931 602l-41 47" stroke="#111" stroke-width="1.500"/>
                                <circle cx="937" cy="441" r="5" fill="#eee" stroke="#111" stroke-width="1.500"/><path d="M936 441h5" stroke="#111" stroke-width="2"/>
                                <circle cx="889" cy="652" r="4.500" fill="#eee" stroke="#111"/><path d="M888 652h5" stroke="#111" stroke-width="2"/>
                                <path d="M954 432l7-17-7-4 20-14 4 20-7-1-10 20z" fill="#b9bbb6" stroke="#e4e6e0" stroke-width="1.500"/>
                                <path d="M957 433l7-16M974 399l-3 17 6 1" fill="none" stroke="#444" stroke-width="2"/>
                                <g stroke="#0000f0" fill="#0000f0" stroke-width="2"><path d="M750 888l-7-24M750 888l18 3M745 884l10 9M755 883l-10 10"/><path d="M742 858l-2 9 8-2zM773 891l-9-4-1 7z"/></g>
                                <g stroke-width="6"><path d="M552 941l-6-22" stroke="#1f6a24"/><path d="M552 941l12-25" stroke="#1f1fb0"/><path d="M552 941l32 7" stroke="#b51a1a"/></g>
                                <path d="M539 919l5-4 8 2 2 7-5 5-8-3z" fill="#175a1c"/><path d="M568 906l-11 9 15 5z" fill="#3b3be0"/><path d="M596 951l-15-9-2 14z" fill="#8c1414"/>
                                <text x="536" y="914" class="axis" fill="#1f7a24">Y</text><text x="564" y="904" class="axis" fill="#2323c0">Z</text><text x="594" y="958" class="axis" fill="#d01c1c">X</text>
                            </g>
                        </svg>
                        <div class="tree"><span class="plus">+</span><svg><use href="#part"/></svg><span>零件3</span><span>(默认&lt;&lt;默认&gt;_显...</span></div>
                        <span class="tag tag-neutral">中性面</span>
                        <span class="tag tag-draft">拔模面</span>
                        <button class="corner yes" aria-label="接受"><svg><use href="#ok"/></svg></button>
                        <button class="corner no" aria-label="放弃"><svg><use href="#cross2"/></svg></button>
                        <div class="taskpane">
                            <button aria-label="资源"><svg><use href="#home"/></svg></button>
                            <button aria-label="设计库"><svg><use href="#library"/></svg></button>
                            <button aria-label="文件探索器"><svg><use href="#folder"/></svg></button>
                            <button aria-label="视图调色板"><svg><use href="#palette"/></svg></button>
                            <button class="active" aria-label="外观布景"><svg><use href="#ball"/></svg></button>
                            <button aria-label="自定义属性"><svg><use href="#custom"/></svg></button>
                        </div>
                    </div>
                </div>
                <div class="sheettabs">
                    <div class="nav">
                        <button aria-label="首个"><svg viewBox="0 0 24 20"><path d="M7 4v12M17 4v12l-7-6z"/></svg></button>
                        <button aria-label="上一个"><svg viewBox="0 0 24 20"><path d="M15 4v12l-7-6z"/></svg></button>
                        <button aria-label="下一个"><svg viewBox="0 0 24 20"><path d="M9 4v12l7-6z"/></svg></button>
                        <button aria-label="末个"><svg viewBox="0 0 24 20"><path d="M17 4v12M7 4v12l7-6z"/></svg></button>
                    </div>
                    <a href="#" class="active">模型</a>
                    <a href="#">运动算例 1</a>
                </div>
            </div>
        </div>
    </div>

    <footer class="status">
        <span class="hint">设定要拔模的中性面和面。</span>
        <i></i><i></i>
        <span class="mode">在编辑 零件</span>
        <i></i><i></i><i></i>
        <span class="units">自定义</span>
        <button class="q" aria-label="快速提示">?</button>
        <svg class="moon" viewBox="0 0 12 18"><path d="M9 1C0 5 0 13 9 17 5 12 5 6 9 1z"/></svg>
        <svg class="size" viewBox="0 0 18 18"><path d="M14 0h4v4h-4zM14 7h4v4h-4zM14 14h4v4h-4zM7 7h4v4H7zM7 14h4v4H7zM0 14h4v4H0z"/></svg>
    </footer>
</div>

</body>
</html>
```

FILE: styles.css
```css
*{
    box-sizing: border-box;
    margin: 0;
    padding: 0;
}
body{
    background: #fff;
    color: #111;
    font: 19px/21px "Noto Sans", "Noto Sans CJK SC", sans-serif;
}
button{
    background: none;
    border: 0;
    font: inherit;
    color: inherit;
}
a{
    color: inherit;
    text-decoration: none;
}
.sprite{
    position: absolute;
    width: 0;
    height: 0;
}
svg{
    display: block;
    width: 26px;
    height: 26px;
    flex: none;
    stroke-linejoin: round;
}
.latin{
    font-size: 16px;
}
.window{
    display: flex;
    flex-direction: column;
    height: 100vh;
    overflow: hidden;
    border: 2px solid #454653;
    border-radius: 8px;
}

/* shared parts of the greyed icons */
.d{ fill: #c3c5cc; }
.k{ fill: #a4a6ac; }
.w{ fill: none; stroke: #d6d8e0; stroke-width: 1; }

/* title bar */
.titlebar{
    display: flex;
    height: 45px;
    flex: none;
    border-bottom: 2px solid #3d3e4a;
    background: linear-gradient(#e6e8f6, #d2d5e8 45%, #bcc0d6 60%, #c6c9dd);
}
.brand{
    display: flex;
    align-items: center;
    gap: 7px;
    width: 198px;
    flex: none;
    padding-left: 7px;
    background: linear-gradient(#e8eaf8, #cdd1e4 50%, #c4c8dc);
}
.cube{
    width: 34px;
    height: 34px;
}
.name{
    padding-top: 3px;
    font: italic 22px "Open Sans", sans-serif;
    color: #15151d;
}
.name b{
    font-weight: 800;
}
.menu{
    display: flex;
    align-items: center;
    gap: 24px;
    flex: none;
    padding: 3px 8px 0 12px;
    border-left: 14px solid #8388b4;
    border-right: 2px solid #555868;
    color: #2b2a63;
    white-space: nowrap;
}
.pin{
    margin-left: -6px;
}
.pin svg{
    width: 24px;
    height: 24px;
}
.quick{
    display: flex;
    align-items: center;
    flex: none;
    padding-left: 7px;
    fill: #dfe1ea;
    stroke: #9a9ca6;
}
.quick, .winbtns.dark{
    background: linear-gradient(#e9ecf9, #d0d4e6 50%, #b6bbd2);
}
.quick button{
    width: 28px;
    display: flex;
    justify-content: center;
}
.quick button:last-child{
    width: 24px;
}
.quick .drop::after, .menubtn::after, .has::after{
    content: "";
    border: 4px solid transparent;
    border-top: 5px solid #9a9ca8;
    border-bottom: 0;
}
.quick .on::after{
    border-top-color: #2a2b4a;
}
.dots{
    width: 7px;
    height: 12px;
    margin: 0 12px 0 11px;
    background:
        linear-gradient(#666, #666) 0 0/2px 2px no-repeat,
        linear-gradient(#666, #666) 0 8px/2px 2px no-repeat,
        linear-gradient(#666, #666) 5px 10px/2px 2px no-repeat;
}
.winbtns{
    display: flex;
    align-items: center;
    flex: 1;
    justify-content: flex-end;
    padding-right: 6px;
    stroke: #77787e;
}
.winbtns.dark{
    stroke: #3f404b;
}
.winbtns button{
    width: 36px;
    display: flex;
    justify-content: center;
}
.winbtns svg{
    width: 24px;
    height: 24px;
}

/* ribbon */
.ribbon{
    display: flex;
    height: 116px;
    flex: none;
    padding: 3px 32px 0 12px;
    border-bottom: 3px solid #6a6d80;
    background: linear-gradient(#fdfdfe, #eceef5 40%, #dcdee9 75%, #cfd1de);
    color: #a5a599;
    fill: #e6e7ec;
    stroke: #a8aab0;
    stroke-width: 1.5px;
    white-space: nowrap;
}
.big{
    display: flex;
    flex-direction: column;
    align-items: center;
    width: 78px;
    padding-top: 19px;
}
.mid{
    width: 72px;
}
.menubtn{
    width: 62px;
    padding: 8px 0 12px;
}
.menubtn::after{
    margin-top: auto;
}
.wide{
    width: 92px;
}
.stack{
    padding: 0 4px;
}
.stack button{
    display: flex;
    align-items: center;
    gap: 9px;
    height: 36px;
}
.stack + .rule{
    margin-left: 9px;
}
.stack + .stack{
    margin-left: 10px;
}
.menubtn + .stack{
    margin-left: 4px;
}
.stack + .stack + .rule{
    margin-left: 11px;
}
.stack + .stack + .rule + .menubtn{
    margin-left: 6px;
}
.rule{
    width: 2px;
    margin: 6px 0 8px;
    background: linear-gradient(90deg, #c3c5cf 50%, #fff 50%);
}
.ds{
    width: 120px;
    height: 112px;
    margin-left: auto;
    fill: #d6dcec;
    stroke: none;
}

/* command tabs and view toolbar */
.workspace{
    display: flex;
    flex-direction: column;
    flex: 1;
    min-height: 0;
    border-left: 4px solid #8d91b2;
    border-right: 6px solid #a4a8c6;
}
.tabrow{
    display: flex;
    height: 30px;
    flex: none;
}
.tabs{
    display: flex;
    flex: none;
    padding-left: 2px;
    background: #a9adc4;
}
.tabs a{
    min-width: 87px;
    padding: 2px 10px 0;
    border-right: 2px solid #54566a;
    border-bottom: 2px solid #54566a;
    background: linear-gradient(#adb0c6, #b9bcd0);
    color: #33343c;
    text-align: center;
    white-space: nowrap;
}
.tabs .dim{
    padding: 2px 12px 0;
    font-size: 18px;
}
.tabs .active{
    min-width: 85px;
    margin-top: -3px;
    padding-top: 5px;
    background: linear-gradient(#d2d4e0, #fff);
    color: #111;
}
.headsup{
    position: relative;
    z-index: 2;
    display: flex;
    gap: 8px;
    padding: 9px 0 0 109px;
}
.headsup button{
    display: flex;
    align-items: center;
    justify-content: center;
    width: 28px;
    height: 26px;
}
.headsup .has{
    width: 42px;
}
.has svg{
    margin-right: 4px;
}
.has::after{
    border-top-color: #55586a;
}
.tabrow .winbtns{
    position: relative;
    z-index: 2;
    height: 46px;
    padding-right: 8px;
}
.middle{
    display: flex;
    flex: 1;
    min-height: 0;
}

/* docked toolbars */
.docks{
    display: flex;
    align-items: flex-start;
    padding-top: 6px;
    background: linear-gradient(#cfd2e4 6px, #b7bbd3 6px);
    border-bottom: 2px solid #f4f4ee;
}
.dock{
    width: 68px;
    padding: 0 6px 10px 9px;
    border-right: 2px solid #f8f8fa;
    border-bottom: 2px solid #fbfbf4;
    background: linear-gradient(90deg, #cfd4ea, #e4e8f6 28%, #d4d8ea 50%, #b2b7cd);
    fill: #dcdfea;
    stroke: #999ca8;
    stroke-width: 1.5px;
}
.dock button{
    display: flex;
    align-items: center;
    height: 36px;
}
.dock svg{
    width: 25px;
    height: 25px;
}
.dock .short{
    height: 30px;
}
.dock hr{
    height: 2px;
    margin: 5px 0;
    border: 0;
    background: #d9d8cf;
}
.grip{
    display: block;
    height: 4px;
    margin: 5px 0 10px -4px;
    background: repeating-linear-gradient(90deg, #8e92ac 0 3px, #f4f5fb 3px 6px);
}
.dockcol .dock{
    width: 46px;
}
.dockcol .last{
    padding-bottom: 4px;
    border-bottom: 0;
}
.dockcol .last .grip{
    margin-bottom: 12px;
}

/* main column */
.main{
    display: flex;
    flex-direction: column;
    flex: 1;
    min-width: 0;
}
.split{
    display: flex;
    flex: 1;
    min-height: 0;
}
.panel{
    position: relative;
    display: flex;
    flex-direction: column;
    width: 302px;
    flex: none;
    padding-top: 14px;
    border-right: 3px solid #6b6d82;
    border-bottom: 4px solid #9a9db4;
    background: linear-gradient(#b9bcd2 4px, #6b6e88 4px, #6b6e88 6px, #d5d7e4 6px, #e0e2ec 60px);
}
.ptabs{
    display: flex;
    gap: 2px;
    height: 34px;
    flex: none;
    border-bottom: 2px solid #8e91a8;
}
.ptabs button{
    display: flex;
    align-items: center;
    justify-content: center;
    width: 41px;
    height: 33px;
    border: 2px solid #9093a8;
    border-bottom: 0;
    border-radius: 7px 7px 0 0;
    background: linear-gradient(#c9ccda, #b3b7cc);
}
.ptabs .active{
    height: 34px;
    background: #f1f2f8;
}
.ptitle{
    display: flex;
    align-items: center;
    gap: 4px;
    height: 34px;
    flex: none;
    margin: 4px 3px 0 0;
    padding: 0 10px 4px 3px;
    border: 1px solid #5c5a76;
    border-bottom-width: 2px;
    background: linear-gradient(#757090, #a9a6bb 55%, #8f8ca6 60%, #a5a2b8);
    color: #fff;
    font-size: 24px;
    line-height: 28px;
}
.ptitle button{
    margin-left: auto;
    font-size: 22px;
    font-weight: bold;
}
.actions{
    display: flex;
    height: 44px;
    flex: none;
}
.actions button{
    display: flex;
    align-items: center;
    justify-content: center;
    width: 40px;
    padding-right: 6px;
}
.actions svg{
    width: 24px;
    height: 24px;
}
.off{
    fill: #b9bac2;
    stroke: #9c9da6;
}
.segment{
    display: flex;
    height: 39px;
    margin: 14px 24px 6px 23px;
    border: 2px solid #85869a;
    border-radius: 7px;
    overflow: hidden;
    flex: none;
    color: #444653;
}
.segment button{
    flex: 1;
    background: linear-gradient(#f3f4f8, #d9dbe4);
    font-size: 16px;
}
.segment .active{
    border-right: 2px solid #85869a;
    background: #b5b8dc;
    font-size: 19px;
}
.scroller{
    display: flex;
    flex: 1;
    gap: 3px;
    min-height: 0;
    padding: 3px;
    border-top: 2px solid #b4b6c2;
}
.groups{
    flex: 1;
    display: flex;
    flex-direction: column;
    gap: 14px;
}
.group{
    border: 2px solid #9c9ea8;
    background: #e6e7f1;
}
.group h2{
    display: flex;
    align-items: center;
    justify-content: space-between;
    height: 28px;
    padding: 0 8px 0 5px;
    border-bottom: 2px solid #9c9ea8;
    background: linear-gradient(#e2e3ea, #d3d5de 45%, #bdbfcb 55%, #cfd1dc);
    font-size: 19px;
    color: #33353f;
}
.group h2 svg{
    width: 14px;
    height: 16px;
}
.radios{
    display: flex;
    flex-direction: column;
    gap: 10px;
    padding: 7px 6px 9px;
}
.radios label{
    display: flex;
    align-items: center;
    height: 21px;
}
.radios input{
    appearance: none;
    width: 20px;
    height: 20px;
    margin-right: 4px;
    border: 2px solid #4c7190;
    border-radius: 50%;
    background: radial-gradient(#fff, #eef0ee);
}
.radios input:checked{
    background: radial-gradient(#2ea52e 3px, #fff 5px);
}
.row{
    display: grid;
    grid-template-columns: 45px 1fr;
    padding: 5px 10px 13px 6px;
}
.lead{
    width: 30px;
    height: 30px;
    margin: 4px 0 0 6px;
}
.spin{
    display: flex;
    gap: 2px;
}
input[type=text], .combo select{
    width: 100%;
    min-width: 0;
    height: 32px;
    padding: 0 3px 3px;
    border: 2px solid #8e9bb5;
    background: #fff;
    color: #33353f;
    font: 18px "Noto Sans", "Noto Sans CJK SC", sans-serif;
    outline: none;
}
.spin input{
    border-right: 0;
}
#angle-in{
    font-size: 17px;
}
.steps{
    display: flex;
    flex-direction: column;
    gap: 2px;
}
.steps button{
    display: flex;
    align-items: center;
    justify-content: center;
    width: 25px;
    height: 15px;
    border: 2px solid #edf1fb;
    border-radius: 4px;
    background: #b9ccf6;
}
.steps button::after{
    content: "";
    border: 4px solid transparent;
}
.steps .up::after{
    border-top: 0;
    border-bottom-color: #33487a;
}
.steps .down::after{
    border-bottom: 0;
    border-top-color: #33487a;
}
.flip{
    display: flex;
    align-items: center;
    justify-content: center;
    width: 37px;
    height: 38px;
    margin-bottom: -4px;
    border: 2px solid #92939e;
    border-radius: 6px;
    background: linear-gradient(#fafafc, #dfe0e8);
}
.pick{
    display: flex;
    gap: 3px;
}
.pick i{
    width: 16px;
    height: 32px;
    flex: none;
    background: #ff80bf;
}
.tall{
    padding-bottom: 10px;
}
.faces{
    height: 152px;
    margin-left: 2px;
    padding-left: 16px;
    background: #52a5fb;
}
.faces select{
    width: 100%;
    height: 100%;
    border: 3px solid #56aade;
    background: #cfe4f8;
    font: 18px "Noto Sans", "Noto Sans CJK SC", sans-serif;
    overflow: hidden;
    outline: none;
}
.faces option{
    height: 25px;
    min-height: 25px;
    padding: 0;
    line-height: 23px;
}
.faces option:checked{
    background: #316ac5 linear-gradient(#316ac5, #316ac5);
    -webkit-text-fill-color: #fff;
}
.cap{
    grid-column: 2;
    margin: 14px 0 16px 2px;
    font-size: 18px;
    color: #33353f;
}
.combo{
    grid-column: 2;
    position: relative;
    margin-left: 2px;
}
.combo select{
    appearance: none;
    padding-bottom: 0;
}
.combo svg{
    position: absolute;
    right: 3px;
    top: 3px;
    width: 24px;
    height: 26px;
    background: #b9ccf4;
    pointer-events: none;
}
.combo path, .scrollbar path{
    fill: none;
    stroke: #3c5480;
    stroke-width: 3;
}
.scrollbar{
    display: flex;
    flex-direction: column;
    gap: 2px;
    width: 23px;
    background: #f4f5f3;
}
.scrollbar button{
    height: 24px;
    border: 1px solid #fff;
    border-radius: 3px;
    background: #bccdf8;
}
.scrollbar svg{
    width: 21px;
    height: 22px;
}
.thumb{
    display: flex;
    align-items: center;
    justify-content: center;
    flex: 1;
    margin-bottom: 14px;
    border: 1px solid #fff;
    border-radius: 3px;
    background: linear-gradient(90deg, #c9d8fd, #b5c9f8);
}
.thumb i{
    width: 11px;
    height: 12px;
    background: repeating-linear-gradient(#eef3ff 0 2px, #9fb4e6 2px 3px);
}
.handle{
    position: absolute;
    right: -15px;
    top: 382px;
    z-index: 2;
    display: flex;
    flex-direction: column;
    justify-content: space-around;
    align-items: center;
    width: 15px;
    height: 46px;
    padding: 3px 0;
    border: 2px solid #6b6d82;
    border-left: 0;
    border-radius: 0 6px 6px 0;
    background: #dddfea;
}
.handle i{
    border: 4px solid transparent;
    border-right: 6px solid #5a4a80;
    border-left: 0;
}

/* graphics area */
.viewport{
    position: relative;
    flex: 1;
    min-width: 0;
    background: #fff;
}
.model{
    position: absolute;
    inset: 0;
    width: 100%;
    height: 100%;
}
.axis{
    font: bold 14px "Liberation Serif", serif;
}
.tree{
    position: relative;
    display: flex;
    align-items: center;
    padding: 13px 0 0 4px;
    font-size: 18px;
    line-height: 28px;
}
.tree svg{
    margin: 0 6px 0 8px;
}
.tree span + span{
    margin-left: 23px;
}
.plus{
    width: 13px;
    height: 13px;
    border: 1px solid #555;
    font: 14px/10px "Liberation Sans", sans-serif;
    text-align: center;
}
.tag{
    position: absolute;
    width: 81px;
    height: 19px;
    padding-left: 20px;
    border: 2px solid #3a3866;
    background: #e4e4f0;
    color: #2b2a63;
    font-size: 16px;
    line-height: 14px;
    white-space: nowrap;
}
.tag-neutral{
    left: 338px;
    top: 130px;
}
.tag-draft{
    left: 441px;
    top: 396px;
}
.corner{
    position: absolute;
    opacity: .25;
}
.corner svg{
    width: 38px;
    height: 38px;
}
.yes{
    right: 114px;
    top: 20px;
}
.no{
    right: 63px;
    top: 67px;
}
.taskpane{
    position: absolute;
    right: 0;
    top: 64px;
}
.taskpane button{
    display: flex;
    align-items: center;
    justify-content: center;
    width: 38px;
    height: 37px;
    border: 2px solid #8487a0;
    border-right: 0;
    border-radius: 6px 0 0 6px;
    background: #b5b8cd;
}
.taskpane .active{
    background: #f3f4fa;
}

/* sheet tabs */
.sheettabs{
    display: flex;
    height: 22px;
    flex: none;
    padding-left: 3px;
    border-top: 2px solid #33343c;
    background: #e0e3ed;
    font-size: 18px;
    line-height: 18px;
}
.nav{
    display: flex;
    gap: 1px;
    padding-right: 3px;
    background: #d5d7e2;
}
.nav button{
    width: 24px;
    background: #a9abbc;
}
.nav svg{
    width: 24px;
    height: 20px;
    fill: #8d8fa2;
    stroke: #8d8fa2;
    stroke-width: 2;
}
.sheettabs a{
    padding: 0 15px;
    border: 2px solid #33343c;
    border-top: 0;
    background: #a9abbd;
}
.sheettabs a + a{
    padding: 0 22px 0 9px;
    border-left: 0;
}
.sheettabs .active{
    background: #e2e4ee;
}

/* status bar */
.status{
    display: flex;
    align-items: center;
    height: 36px;
    flex: none;
    padding: 0 8px 5px 7px;
    border-top: 2px solid #64677a;
    background: linear-gradient(#cccfe2, #c5c8da 40%, #abadb9);
    font-size: 18px;
}
.hint{
    margin-right: auto;
}
.status i{
    width: 2px;
    height: 22px;
    margin-right: 10px;
    background: #f0f1f6;
}
.mode{
    margin: 0 8px 0 -2px;
    font-size: 19px;
}
.units{
    display: flex;
    align-items: center;
    gap: 13px;
    margin-left: 22px;
    color: #a0a2b0;
}
.units::after{
    content: "";
    border: 4px solid transparent;
    border-top: 0;
    border-bottom-color: #8b8d9c;
}
.q{
    width: 21px;
    height: 21px;
    margin: 0 76px 0 27px;
    border: 2px solid #2a4a78;
    background: #effbef;
    color: #0f9a22;
    font-size: 18px;
    font-weight: bold;
    line-height: 17px;
}
.moon{
    width: 12px;
    height: 18px;
    fill: #f4bb1c;
    stroke: #a97a10;
}
.size{
    width: 18px;
    height: 18px;
    margin: 8px 0 0 32px;
    fill: #eceef4;
}
```
